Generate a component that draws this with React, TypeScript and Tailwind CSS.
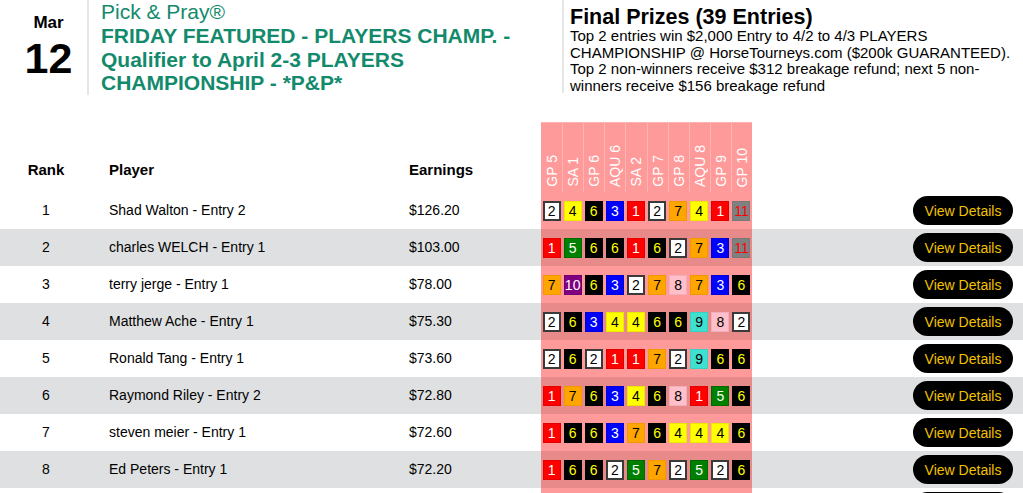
import React from "react";

const FONT = { fontFamily: '"Liberation Sans", Arial, sans-serif' };

const races = ["GP 5", "SA 1", "GP 6", "AQU 6", "SA 2", "GP 7", "GP 8", "AQU 8", "GP 9", "GP 10"];

const rows = [
  { rank: 1, name: "Shad Walton - Entry 2", earn: "$126.20", picks: [2, 4, 6, 3, 1, 2, 7, 4, 1, 11] },
  { rank: 2, name: "charles WELCH - Entry 1", earn: "$103.00", picks: [1, 5, 6, 6, 1, 6, 2, 7, 3, 11] },
  { rank: 3, name: "terry jerge - Entry 1", earn: "$78.00", picks: [7, 10, 6, 3, 2, 7, 8, 7, 3, 6] },
  { rank: 4, name: "Matthew Ache - Entry 1", earn: "$75.30", picks: [2, 6, 3, 4, 4, 6, 6, 9, 8, 2] },
  { rank: 5, name: "Ronald Tang - Entry 1", earn: "$73.60", picks: [2, 6, 2, 1, 1, 7, 2, 9, 6, 6] },
  { rank: 6, name: "Raymond Riley - Entry 2", earn: "$72.80", picks: [1, 7, 6, 3, 4, 6, 8, 1, 5, 6] },
  { rank: 7, name: "steven meier - Entry 1", earn: "$72.60", picks: [1, 6, 6, 3, 7, 6, 4, 4, 4, 6] },
  { rank: 8, name: "Ed Peters - Entry 1", earn: "$72.20", picks: [1, 6, 6, 2, 5, 7, 2, 5, 2, 6] },
];

const boxStyles: Record<number, string> = {
  1: "bg-[#ff0000] text-white border border-[#e00000]",
  2: "bg-white text-black border-2 border-[#3a3a3a]",
  3: "bg-[#0000ff] text-white border border-[#0000d8]",
  4: "bg-[#ffff00] text-black border border-[#e8e800]",
  5: "bg-[#008000] text-white border border-[#006a00]",
  6: "bg-black text-[#ffff00] border border-black",
  7: "bg-[#ffa500] text-black border border-[#f09a00]",
  8: "bg-[#ffc0cb] text-black border border-[#f0b0bb]",
  9: "bg-[#40e0d0] text-black border border-[#38d0c0]",
  10: "bg-[#800080] text-white border border-[#700070]",
  11: "bg-[#808080] text-[#ff0000] border border-[#787878]",
};

function Box({ n }: { n: number }) {
  return (
    <div className="flex items-center justify-center">
      <div
        className={`w-[18px] h-[20px] flex items-center justify-center text-[14px] leading-none box-border ${boxStyles[n]}`}
      >
        {n}
      </div>
    </div>
  );
}

export default function App() {
  return (
    <div className="w-[1023px] h-[493px] overflow-hidden bg-white text-black" style={FONT}>
      {/* Top header */}
      <div className="flex items-start h-[122px]">
        <div className="w-[87px] flex flex-col items-center pt-[13px]">
          <div className="text-[17px] font-bold leading-[20px] pl-[10px]">Mar</div>
          <div className="text-[43px] font-bold leading-[44px] pl-[10px] mt-[3px]">12</div>
        </div>
        <div className="w-[475px] border-l-2 border-[#e6e6e6] pl-[12px] h-[95px] text-[#138a6c]">
          <div className="w-[432px]">
            <div className="text-[21px] leading-[24px]">Pick &amp; Pray®</div>
            <div className="text-[21px] font-bold leading-[23.5px]">
              FRIDAY FEATURED - PLAYERS CHAMP. - Qualifier to April 2-3 PLAYERS CHAMPIONSHIP - *P&amp;P*
            </div>
          </div>
        </div>
        <div className="flex-1 border-l-2 border-[#e6e6e6] pl-[6px] h-[93px] pr-[8px]">
          <div className="text-[21.5px] font-bold leading-[22px] mt-[6px]">Final Prizes (39 Entries)</div>
          <div className="text-[15px] leading-[16.6px]">
            Top 2 entries win $2,000 Entry to 4/2 to 4/3 PLAYERS CHAMPIONSHIP @ HorseTourneys.com ($200k GUARANTEED). Top 2 non-winners receive $312 breakage refund; next 5 non-winners receive $156 breakage refund
          </div>
        </div>
      </div>

      {/* Table header */}
      <div className="grid grid-cols-[92px_317px_132px_211px_1fr] h-[70px] text-[15px] font-bold">
        <div className="flex items-end justify-center pb-[11px]">Rank</div>
        <div className="flex items-end pl-[17px] pb-[11px]">Player</div>
        <div className="flex items-end pb-[11px]">Earnings</div>
        <div className="grid grid-cols-10 bg-[#ff9a9a] border-t border-[#ffb4b4]">
          {races.map((r, i) => (
            <div
              key={r}
              className={`flex items-end justify-center pb-[5px] ${i > 0 ? "border-l border-[#ffb4b4]" : ""}`}
            >
              <span className="[writing-mode:vertical-rl] rotate-180 text-white font-normal text-[14px] leading-[16px] whitespace-nowrap">
                {r}
              </span>
            </div>
          ))}
        </div>
        <div />
      </div>

      {/* Rows */}
      {rows.map((row, idx) => {
        const gray = idx % 2 === 1;
        return (
          <div
            key={row.rank}
            className={`grid grid-cols-[92px_317px_132px_211px_1fr] h-[37px] text-[14px] ${gray ? "bg-[#dfe0e2]" : "bg-white"}`}
          >
            <div className="flex items-center justify-center">{row.rank}</div>
            <div className="flex items-center pl-[17px]">{row.name}</div>
            <div className="flex items-center">{row.earn}</div>
            <div className={`grid grid-cols-10 items-center ${gray ? "bg-[#e8898a]" : "bg-[#ff9a9a]"}`}>
              {row.picks.map((p, i) => (
                <Box key={i} n={p} />
              ))}
            </div>
            <div className="flex items-center justify-end pr-[10px]">
              <button className="w-[100px] h-[29px] rounded-full bg-black text-[#f2c200] text-[14px] leading-none">
                View Details
              </button>
            </div>
          </div>
        );
      })}

      {/* Next row, only its top edge visible */}
      <div className="grid grid-cols-[92px_317px_132px_211px_1fr] h-[37px] bg-white">
        <div />
        <div />
        <div />
        <div className="bg-[#ff9a9a]" />
        <div className="flex items-start justify-end pr-[10px] pt-[4px]">
          <div className="w-[100px] h-[29px] rounded-full bg-black" />
        </div>
      </div>
    </div>
  );
}
